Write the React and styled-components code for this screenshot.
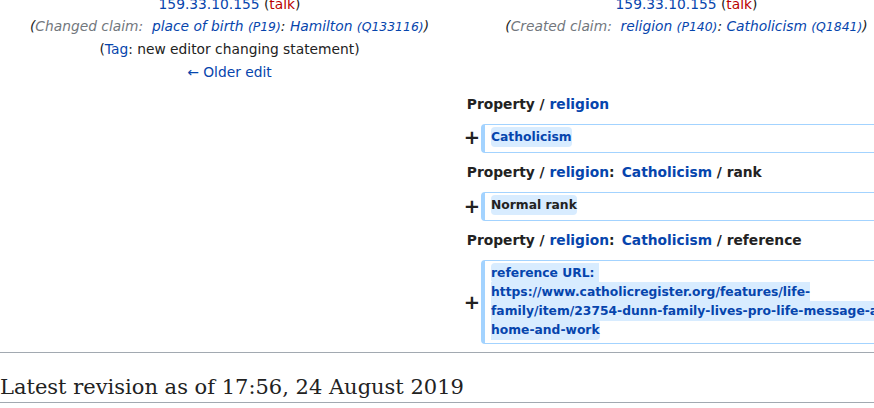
import React from "react";
import styled, { createGlobalStyle } from "styled-components";

const GlobalStyle = createGlobalStyle`
  html, body {
    margin: 0;
    padding: 0;
    background: #fff;
    overflow: hidden;
  }
  body {
    font-family: "DejaVu Sans", sans-serif;
    color: #222;
  }
`;

const Page = styled.div`
  width: 913px;
  margin-top: -12px;
`;

const DiffTable = styled.div`
  display: grid;
  grid-template-columns: 17px 432px 17px 432px;
  column-gap: 4px;
  row-gap: 4px;
  padding-left: 3px;
  font-size: 13.8px;
  line-height: 22.4px;
`;

const TitleCell = styled.div`
  grid-column: ${props => (props.$side === "new" ? "3 / span 2" : "1 / span 2")};
  text-align: center;
  padding: 4.5px 6.8px 1px;
`;

const Empty = styled.div`
  grid-column: 1 / span 2;
`;

const LineNo = styled.div`
  grid-column: 3 / span 2;
  padding: 4.5px 6.8px;
  font-weight: bold;
`;

const Marker = styled.div`
  grid-column: 3;
  align-self: center;
  margin-right: -3px;
  text-align: right;
  font-weight: bold;
  font-size: 19.5px;
  line-height: 1.2;
`;

const AddedLine = styled.div`
  grid-column: 4;
  box-sizing: border-box;
  min-height: 29px;
  border: 1px solid #a3d3ff;
  border-left-width: 4px;
  border-radius: 4px;
  padding: 3px 6px;
  font-size: 12.32px;
  line-height: 19px;
  white-space: pre-wrap;
  overflow-wrap: break-word;
`;

const Ins = styled.span`
  background: #d8ecff;
  font-weight: bold;
  border-radius: 4px;
  padding: 3px 0;
  color: ${props => (props.$link ? "#0645ad" : "#222")};
`;

const Link = styled.a`
  color: ${props => (props.$red ? "#ba0000" : "#0645ad")};
  text-decoration: none;
  margin-left: ${props => (props.$gap ? "2.4px" : "0")};
`;

const Comment = styled.span`
  font-style: italic;
`;

const AutoComment = styled.span`
  color: #72777d;
`;

const ItemId = styled.span`
  font-size: 0.9em;
`;

const Rule = styled.hr`
  border: 0;
  height: 1px;
  background: #a2a9b1;
  margin: 8px 0 0;
`;

const CurrentTitle = styled.h2`
  font-family: "DejaVu Serif", serif;
  font-size: 21px;
  font-weight: normal;
  line-height: 1.3;
  margin: 21px 0 0;
  padding: 0;
  border-bottom: 1px solid #a2a9b1;
`;

const User = () => (
  <div>
    <Link href="#">159.33.10.155</Link> (<Link $red href="#">talk</Link>)
  </div>
);

const Header = ({ children }) => (
  <>
    <Empty />
    <LineNo>{children}</LineNo>
  </>
);

const Added = ({ children }) => (
  <>
    <Empty />
    <Marker>+</Marker>
    <AddedLine>{children}</AddedLine>
  </>
);

export default function App() {
  return (
    <Page>
      <GlobalStyle />
      <DiffTable>
        <TitleCell>
          <User />
          <div>
            <Comment>
              (<AutoComment>Changed claim:&nbsp;</AutoComment>{" "}
              <Link href="#">
                place of birth <ItemId>(P19)</ItemId>
              </Link>
              :{" "}
              <Link href="#">
                Hamilton <ItemId>(Q133116)</ItemId>
              </Link>
              )
            </Comment>
          </div>
          <div>
            (<Link href="#">Tag</Link>: new editor changing statement)
          </div>
          <div>
            <Link href="#">← Older edit</Link>
          </div>
        </TitleCell>
        <TitleCell $side="new">
          <User />
          <div>
            <Comment>
              (<AutoComment>Created claim:&nbsp;</AutoComment>{" "}
              <Link href="#">
                religion <ItemId>(P140)</ItemId>
              </Link>
              :{" "}
              <Link href="#">
                Catholicism <ItemId>(Q1841)</ItemId>
              </Link>
              )
            </Comment>
          </div>
        </TitleCell>

        <Header>
          Property / <Link href="#">religion</Link>
        </Header>
        <Added>
          <Ins $link>Catholicism</Ins>
        </Added>

        <Header>
          Property / <Link href="#">religion</Link>: <Link $gap href="#">Catholicism</Link> / rank
        </Header>
        <Added>
          <Ins>Normal rank</Ins>
        </Added>

        <Header>
          Property / <Link href="#">religion</Link>: <Link $gap href="#">Catholicism</Link> / reference
        </Header>
        <Added>
          <Ins $link>
            reference URL: https://www.catholicregister.org/features/life-family/item/23754-dunn-family-lives-pro-life-message-at-home-and-work
          </Ins>
        </Added>
      </DiffTable>
      <Rule />
      <CurrentTitle>Latest revision as of 17:56, 24 August 2019</CurrentTitle>
    </Page>
  );
}
